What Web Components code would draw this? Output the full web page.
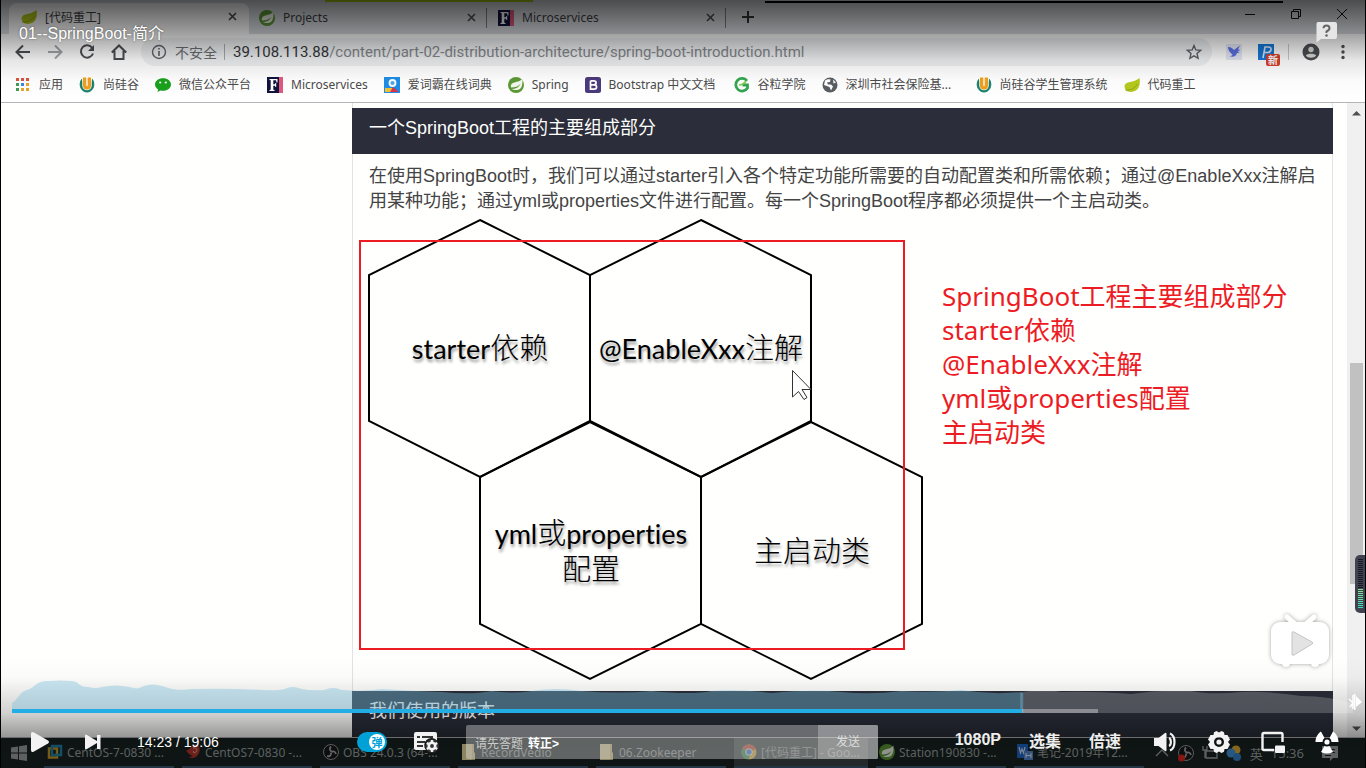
<!DOCTYPE html>
<html lang="zh-CN">
<head>
<meta charset="utf-8">
<title>01--SpringBoot-简介</title>
<style>
html,body{margin:0;height:100%;background:#000;overflow:hidden}
</style>
</head>
<body>
<video-player></video-player>

<template id="t-icon"><style>:host{display:block;flex:none;width:16px;height:16px}svg{display:block;width:100%;height:100%;overflow:visible}</style></template>

<template id="t-tab">
<style>
:host{display:flex;box-sizing:border-box;width:239px;height:27px;align-items:center;gap:8px;padding:0 10px;color:#3c4043;font-size:12px;position:relative}
:host([active]){background:#fff;height:31px;padding:0 10px 4px 12px;border-radius:8px 8px 0 0}
:host([line])::after{content:"";position:absolute;right:1px;top:4px;height:20px;width:1px;background:#7c7e82}
span{flex:1;white-space:nowrap}
button{all:unset;width:14px;height:14px;display:grid;place-items:center}
button svg{width:9px;height:9px}
</style>
<slot name="icon"></slot><span><slot></slot></span>
<button aria-label="关闭标签"><svg viewBox="0 0 9 9"><path d="M1 1l7 7M8 1L1 8" stroke="#4a4c50" stroke-width="1.6"/></svg></button>
</template>

<template id="t-bookmark">
<style>
:host{display:block;flex:none}
a{display:flex;align-items:center;gap:8px;color:#4a4a4a;text-decoration:none;font-size:12px;line-height:18px;white-space:nowrap}
</style>
<a href="#"><slot name="icon"></slot><span><slot></slot></span></a>
</template>

<template id="t-task">
<style>
:host{display:flex;box-sizing:border-box;flex:none;width:130px;height:30px;align-items:center;gap:4px;padding:0 3px;border-bottom:2px solid #3c5873;color:#9da2a2;white-space:nowrap}
:host([active]){width:134px;padding-left:7px;background:#3c4644}
</style>
<slot name="icon"></slot><span><slot></slot></span>
</template>

<template id="t-browser">
<style>
:host{display:flex;flex-direction:column;height:100%;background:#fffffe;font-family:"Noto Sans","Noto Sans CJK SC",sans-serif}
.tabs{display:flex;align-items:flex-end;height:34px;background:#dcdee3;padding-left:9px;box-sizing:border-box;position:relative}
.tabs ui-tab{margin-bottom:3px}
.tabs ui-tab[active]{margin-bottom:0;width:240px}
.new{all:unset;width:42px;height:34px;display:grid;place-items:center}
.win{margin-left:auto;display:flex;align-self:flex-start;gap:30px;padding:6px 15px 0 0}
.win button{all:unset;width:16px;height:16px}
.edge{position:absolute;top:0;height:2px}
.bar{display:flex;align-items:center;height:36px;box-sizing:border-box;padding:0 14px 0 15px;background:#fff;flex:none}
.nav{display:flex;gap:16px;width:126px}
.nav button,.ext button{all:unset;width:16px;height:16px}
.omni{flex:1;display:flex;align-items:center;height:28px;border-radius:14px;background:#eff1f3;padding:0 10px;box-sizing:border-box;color:#6b6e72;white-space:nowrap}
.omni .s{font-size:14px;margin:0 7px 0 8px}
.omni .sep{width:1px;height:16px;background:#aaa;margin-right:8px}
.url{font-size:15px;flex:1;font-family:Roboto,"Noto Sans",sans-serif;color:#85888c}.url b{font-weight:400;color:#33363a}
.ext{display:flex;align-items:center;gap:16px;padding-left:14px}
.ext .sep{width:1px;height:16px;background:#ccc;margin:0 -2px}
.p{position:relative}.p i{position:absolute;left:8px;top:10px;width:14px;height:12px;border-radius:2px;background:#d9412f;color:#fff;font:bold 10px/12px "Noto Sans CJK SC",sans-serif;text-align:center}
.marks{display:flex;align-items:center;gap:16px;height:33px;box-sizing:border-box;border-bottom:1px solid #b5b5b5;padding:0 15px 3px;background:#fff;flex:none}
.view{flex:1;min-height:0;overflow:hidden;display:grid;grid-template-columns:minmax(0,352px) 1fr 14px 18px}
main{border:1px solid #e3e3e6;border-width:0 1px;padding-top:5px;min-width:0}
h2{margin:0 0 0 -1px;height:46px;box-sizing:border-box;padding:7px 17px;background:#2b2e3a;color:#fff;font:400 18px/26px "Liberation Sans","Noto Sans CJK SC",sans-serif;margin-right:-1px}
p{margin:0;padding:10px 16px 0;font:400 18px/25px "Liberation Sans","Noto Sans CJK SC",sans-serif;color:#444;white-space:nowrap}
.scroll{background:#f0f0f0;position:relative;display:flex;flex-direction:column;justify-content:space-between;align-items:center;padding:7px 2px 5px 3px}
.scroll svg{width:9px;height:6px}
.thumb{position:absolute;left:3px;right:2px;top:260px;height:221px;background:#c1c1c1}
</style>
<div class="tabs">
 <span class="edge" style="left:325px;width:208px;background:#a8cc13"></span>
 <span class="edge" style="left:765px;right:82px;top:1px;background:#000"></span>
 <ui-tab active><ui-icon slot="icon" name="leaf"></ui-icon>[代码重工]</ui-tab>
 <ui-tab line><ui-icon slot="icon" name="spring"></ui-icon>Projects</ui-tab>
 <ui-tab line><ui-icon slot="icon" name="f"></ui-icon>Microservices</ui-tab>
 <button class="new" aria-label="新标签"><svg width="12" height="12"><path d="M6 0v12M0 6h12" stroke="#333" stroke-width="2"/></svg></button>
 <div class="win">
  <button aria-label="最小化"><ui-icon name="min"></ui-icon></button><button aria-label="还原"><ui-icon name="restore"></ui-icon></button><button aria-label="关闭"><ui-icon name="close"></ui-icon></button>
 </div>
</div>
<div class="bar">
 <div class="nav">
  <button aria-label="后退"><ui-icon name="back"></ui-icon></button><button aria-label="前进"><ui-icon name="fwd"></ui-icon></button><button aria-label="刷新"><ui-icon name="reload"></ui-icon></button><button aria-label="主页"><ui-icon name="home"></ui-icon></button>
 </div>
 <div class="omni"><ui-icon name="info"></ui-icon><span class="s">不安全</span><span class="sep"></span><span class="url"><b>39.108.113.88</b>/content/part-02-distribution-architecture/spring-boot-introduction.html</span><ui-icon name="star"></ui-icon></div>
 <div class="ext"><ui-icon name="bird"></ui-icon><span class="p"><ui-icon name="p"></ui-icon><i>新</i></span><span class="sep"></span><ui-icon name="user"></ui-icon><ui-icon name="dots"></ui-icon></div>
</div>
<nav class="marks">
 <book-mark><ui-icon slot="icon" name="apps"></ui-icon>应用</book-mark>
 <book-mark><ui-icon slot="icon" name="gu"></ui-icon>尚硅谷</book-mark>
 <book-mark><ui-icon slot="icon" name="wechat"></ui-icon>微信公众平台</book-mark>
 <book-mark><ui-icon slot="icon" name="f"></ui-icon>Microservices</book-mark>
 <book-mark><ui-icon slot="icon" name="ciba"></ui-icon>爱词霸在线词典</book-mark>
 <book-mark><ui-icon slot="icon" name="spring"></ui-icon>Spring</book-mark>
 <book-mark style="width:133px"><ui-icon slot="icon" name="b"></ui-icon>Bootstrap 中文文档</book-mark>
 <book-mark><ui-icon slot="icon" name="g"></ui-icon>谷粒学院</book-mark>
 <book-mark style="width:138px"><ui-icon slot="icon" name="globe"></ui-icon>深圳市社会保险基...</book-mark>
 <book-mark><ui-icon slot="icon" name="gu"></ui-icon>尚硅谷学生管理系统</book-mark>
 <book-mark><ui-icon slot="icon" name="leaf"></ui-icon>代码重工</book-mark>
</nav>
<div class="view">
 <span></span>
 <main>
  <h2>一个SpringBoot工程的主要组成部分</h2>
  <p>在使用SpringBoot时，我们可以通过starter引入各个特定功能所需要的自动配置类和所需依赖；通过@EnableXxx注解启<br>用某种功能；通过yml或properties文件进行配置。每一个SpringBoot程序都必须提供一个主启动类。</p>
  <hex-diagram></hex-diagram>
  <h2>我们使用的版本</h2>
 </main>
 <span></span>
 <div class="scroll"><svg viewBox="0 0 9 6"><path d="M0 5.500L4.500 1 9 5.500z" fill="#505050"/></svg><span class="thumb"></span><svg viewBox="0 0 9 6"><path d="M0 .5h9L4.500 5z" fill="#505050"/></svg></div>
</div>
</template>

<template id="t-hex">
<style>
:host{display:block;position:relative;height:477px}
svg.c{position:absolute;left:0;top:0;width:980px;height:477px;overflow:visible}
.l{position:absolute;width:222px;text-align:center;font:300 29px/34px "Noto Sans CJK SC",sans-serif;color:#000;text-shadow:1px 3px 3px rgba(0,0,0,.4);white-space:nowrap}
.l b{font:400 27px/32px Lato,sans-serif;font-variant-ligatures:none}
.note{position:absolute;left:589px;top:65px;font:26px/34px "Noto Sans","Noto Sans CJK SC",sans-serif;color:#ed1c24;white-space:nowrap}
</style>
<svg class="c" viewBox="353 214 980 477" fill="none" stroke="#000" stroke-width="2">
<path d="M480 220L590 275V421L480 477 369 421V275zM701 220L811 275V421L701 477 590 421V275z"/>
<path d="M590 422L701 477V624L590 679 480 624V477zM811 422L922 477V624L811 679 701 624V477z"/>
</svg>
<div class="l" style="left:16px;top:115px"><b>starter</b>依赖</div>
<div class="l" style="left:237px;top:115px"><b>@EnableXxx</b>注解</div>
<div class="l" style="left:127px;top:300px"><b>yml</b>或<b>properties</b><br>配置</div>
<div class="l" style="left:348px;top:318px">主启动类</div>
<svg class="c" viewBox="353 214 980 477"><rect x="360" y="241" width="544" height="408" fill="none" stroke="#ed1c24" stroke-width="2"/>
<path d="M792.500 370.500V397l6-5.500 5.500 8 3-2-5-8h9z" fill="#fff" stroke="#333" stroke-width="1"/></svg>
<div class="note">SpringBoot工程主要组成部分<br>starter依赖<br>@EnableXxx注解<br>yml或properties配置<br>主启动类</div>
</template>

<template id="t-taskbar">
<style>
:host{display:flex;align-items:center;height:30px;background:#172321;padding-left:11px;gap:8px;border-top:1px solid #b8b8b8;font-family:"Noto Sans","Noto Sans CJK SC",sans-serif;color:#9da2a2;font-size:12px;white-space:nowrap}
.start{margin-right:9px}
.tray{margin-left:auto;display:flex;align-items:center;gap:8px;padding-right:27px;font-size:13px}
</style>
<ui-icon class="start" name="windows"></ui-icon>
<task-item><ui-icon slot="icon" name="vm"></ui-icon>CentOS-7-0830 ...</task-item>
<task-item><ui-icon slot="icon" name="shell"></ui-icon>CentOS7-0830 -...</task-item>
<task-item><ui-icon slot="icon" name="obs"></ui-icon>OBS 24.0.3 (64-...</task-item>
<task-item><ui-icon slot="icon" name="folder"></ui-icon>RecordVedio</task-item>
<task-item><ui-icon slot="icon" name="folder"></ui-icon>06.Zookeeper</task-item>
<task-item active><ui-icon slot="icon" name="chrome"></ui-icon>[代码重工] - Goo...</task-item>
<task-item><ui-icon slot="icon" name="spring"></ui-icon>Station190830 -...</task-item>
<task-item><ui-icon slot="icon" name="note"></ui-icon>笔记-2019年12...</task-item>
<div class="tray"><ui-icon name="chev"></ui-icon><ui-icon name="obsr"></ui-icon><ui-icon name="power"></ui-icon><ui-icon name="cloud"></ui-icon><span>英</span><time>15:36</time><ui-icon name="notif" style="margin-left:10px"></ui-icon></div>
</template>

<template id="t-controls">
<style>
:host{display:block;color:#fff;font-family:"Liberation Sans","Noto Sans CJK SC",sans-serif}
.prog{position:relative;margin:0 12px;height:34px}
.prog svg{position:absolute;inset:0;width:100%;height:100%}
.track{position:absolute;left:0;right:0;bottom:0;height:4px}
.buf{position:absolute;left:0;width:81%;height:4px;background:rgba(255,255,255,.35)}
.done{position:absolute;left:0;width:75.35%;height:4px;background:#23ade5}
.row{display:grid;grid-template-columns:326px 521px 1fr;align-items:center;height:34px;padding:12px 26px 9px 31px}
button{all:unset;display:block;flex:none;white-space:nowrap}
.left{display:flex;align-items:center}
.time{font-size:14px;margin-left:36px}
.mid{display:flex;align-items:center;height:34px}
.switch{appearance:none;margin:0;width:30px;height:20px;border-radius:10px;background:#00a1d6}
.tw{position:relative;height:20px}
.tw span{position:absolute;right:2px;top:2px;width:16px;height:16px;border-radius:8px;background:#fff;color:#00a1d6;font:bold 11px/16px "Noto Sans CJK SC",sans-serif;text-align:center}
.box{flex:1;height:34px;margin-left:28px;display:flex;align-items:center;background:rgba(255,255,255,.34);border-radius:2px;font-size:12px;color:#ccc}
.box label{padding-left:9px;white-space:nowrap}.box a{color:#fff;text-decoration:none;margin-left:5px;white-space:nowrap;font-weight:bold}
.box input{all:unset;flex:1;min-width:0}
.send{width:60px;height:34px;text-align:center;background:rgba(255,255,255,.25);color:#ddd;line-height:34px}
.right{display:flex;justify-content:flex-end;align-items:center;font-size:16px;font-weight:bold;height:34px}
.txt{display:flex;gap:28px;margin-right:32px;color:#eee;padding-bottom:4px}
.ic{display:flex;gap:30px}.ic ui-icon{width:24px;height:24px}
</style>
<div class="prog">
<svg viewBox="0 0 1342 34" preserveAspectRatio="none">
<path fill="rgba(118,190,220,.4)" d="M0 34V24C6 21 8 12 15 11 25 8 22 2 38 2Q48 1 60 2C68 3 66 8 76 8Q84 10 90 8 105 5 117 8C125 10 126 10 132 7Q140 4 150 7C160 10 165 12 180 10Q220 9 250 11 265 12 273 10 280 6 290 10 300 12 312 11 322 7 330 11Q350 13 370 10 400 12 430 13 460 16 480 12 500 15 520 12 545 8 570 12 610 15 640 12 680 16 700 12 730 10 760 14 800 10 830 13 860 16 890 12 920 14 950 11 980 16 1011 13V34z"/>
<path fill="rgba(255,255,255,.2)" d="M1011 34V13Q1035 9 1050 13 1080 12 1120 15 1150 10 1180 12 1200 16 1230 13 1260 12 1290 17 1320 17 1342 25V34z"/>
<path fill="rgba(118,190,220,.4)" d="M1009 14h3v20h-3z"/></svg>
<div class="track"><span class="buf"></span><span class="done"></span></div>
</div>
<div class="row">
 <div class="left"><button aria-label="播放"><ui-icon name="play" style="width:18px;height:22px"></ui-icon></button><button aria-label="下一个" style="margin-left:36px"><ui-icon name="next"></ui-icon></button><span class="time">14:23 / 19:06</span></div>
 <div class="mid"><label class="tw"><input class="switch" type="checkbox" checked aria-label="弹幕"><span>弹</span></label><button aria-label="弹幕设置" style="margin-left:27px"><ui-icon name="dmset" style="width:24px;height:20px"></ui-icon></button>
 <div class="box"><label for="dm">请先答题</label><a href="#">转正&gt;</a><input id="dm" type="text"><button class="send">发送</button></div></div>
 <div class="right"><div class="txt"><button>1080P</button><button>选集</button><button>倍速</button></div>
 <div class="ic"><button aria-label="音量"><ui-icon name="vol"></ui-icon></button><button aria-label="设置"><ui-icon name="gear"></ui-icon></button><button aria-label="画中画"><ui-icon name="pip"></ui-icon></button><button aria-label="全屏"><ui-icon name="rad"></ui-icon></button></div></div>
</div>
</template>

<template id="t-player">
<style>
:host{display:flex;flex-direction:column;height:100vh;box-sizing:border-box;border:solid #000;border-width:0 1px 0 0;position:relative;overflow:hidden;background:#000}
:host::before{content:"";position:absolute;left:0;top:0;bottom:0;width:1px;background:#000;z-index:5}
.screen{flex:1;min-height:0}
.shade{position:absolute;left:0;right:0;top:0;height:100px;background:linear-gradient(rgba(0,0,0,.66),rgba(0,0,0,.37) 34px,rgba(0,0,0,.1) 60px,rgba(0,0,0,.02) 80px,transparent)}
.low{position:absolute;left:0;right:0;bottom:0;height:110px;background:linear-gradient(transparent,rgba(0,0,0,.02) 20px,rgba(0,0,0,.18) 55px,rgba(0,0,0,.42) 80px,rgba(0,0,0,.4))}
h1{position:absolute;left:19px;top:24px;margin:0;font:400 16px/20px "Liberation Sans","Noto Sans CJK SC",sans-serif;color:#fff;text-shadow:0 0 2px rgba(0,0,0,.5)}
.help{position:absolute;right:28px;top:22px;width:21px;height:21px}
.tv{position:absolute;right:34px;bottom:100px;width:62px;height:54px}
.pin{position:absolute;right:3px;bottom:56px;width:14px;height:20px}
.rec{position:absolute;right:-1px;top:555px;width:11px;height:58px;border-radius:5px 0 0 5px;background:#41424f;z-index:6;display:grid;place-items:center}
.rec i{width:5px;height:50px;background:repeating-linear-gradient(transparent 0 1px,#41424f 1px 2px),linear-gradient(#161a26 0 29px,#8fe08a 30px,#34e0c0)}
player-controls{position:absolute;left:0;right:0;bottom:0}
</style>
<browser-window class="screen"></browser-window>
<desktop-taskbar></desktop-taskbar>
<div class="shade"></div><div class="low"></div>
<h1>01--SpringBoot-简介</h1>
<ui-icon class="help" name="help"></ui-icon>
<ui-icon class="tv" name="tv"></ui-icon>
<ui-icon class="pin" name="pin"></ui-icon>
<span class="rec"><i></i></span>
<player-controls></player-controls>
</template>

<script>
const ring='<circle cx="8" cy="8" r="7.500" fill="#15181a" stroke="#9a9a9a"/><path d="M8 2.500c-2 2-1 4 .5 5M13 10c-1-3-3-3-4.500-2M4 12c3 1 4.500-1 4-3.500" fill="none" stroke="#aaa" stroke-width="1.800"/>';
const ICONS={
leaf:['0 0 16 16','<path d="M15.500 1C17 9 14 14.500 7 15 2.500 15 .5 12 .5 9 1 4 10 6 15.500 1z" fill="#b5c91c"/><path d="M1.500 13C6 13.500 11 11.500 13.500 7" stroke="#93a512" stroke-width="1" fill="none"/>'],
spring:['0 0 16 16','<circle cx="8" cy="8" r="8" fill="#5c9a35"/><path d="M14.300 1.500C15 7 14 13.500 8 13c-2 0-3.500-.5-4.500-1C8 12 11 10 12.500 7 10 9.500 7 10.500 3 10.500 1.500 5 9 5 11 4.200 13 3.500 13.500 2.500 14.300 1.500z" fill="#f4f8ee"/>'],
f:['0 0 16 16','<path fill="#10123f" d="M0 0h12v16H0z"/><path fill="#e2587f" d="M12 0h4v16h-4z"/><path fill="#fff" d="M2.500 2h8v3.500H9.500L9 3.300H6.300v4H8l.4-1.300h.8v4h-.8L8 8.700H6.300v4l1.200.4v.9h-5v-.9l1.200-.4V3.300l-1.200-.4z"/>'],
min:['0 0 16 16','<path d="M3 8.500h10" stroke="#111"/>'],
restore:['0 0 16 16','<path d="M3.500 5.500h7v7h-7zM5.500 5V3.500h7v7H11" fill="none" stroke="#111"/>'],
close:['0 0 16 16','<path d="M3 3l10 10M13 3L3 13" stroke="#111"/>'],
back:['0 0 16 16','<path d="M15 8H2M8 1.500L1.500 8 8 14.500" fill="none" stroke="#4b4e52" stroke-width="2"/>'],
fwd:['0 0 16 16','<path d="M1 8h13M8 1.500L14.500 8 8 14.500" fill="none" stroke="#a4a6a8" stroke-width="2"/>'],
reload:['0 0 16 16','<path d="M13.300 4A6.200 6.200 0 1 0 14 9.500" fill="none" stroke="#4b4e52" stroke-width="2"/><path d="M15 1v6H9z" fill="#4b4e52"/>'],
home:['0 0 16 16','<path d="M.8 8.500L8 1.500l7.200 7M3.500 7v8h9V7" fill="none" stroke="#4b4e52" stroke-width="2"/>'],
info:['0 0 16 16','<circle cx="8" cy="8" r="6.500" fill="none" stroke="#5f6368" stroke-width="1.400"/><path d="M8 4v1.600M8 7v5" stroke="#5f6368" stroke-width="1.600"/>'],
star:['0 0 16 16','<path d="M8 1.500l1.800 4.400 4.900.4-3.700 3.200 1.100 4.800L8 11.800l-4.100 2.500L5 9.500 1.300 6.300l4.900-.4z" fill="none" stroke="#5f6368" stroke-width="1.400"/>'],
bird:['0 0 16 16','<path fill="#e6e8f5" d="M0 0h16v16H0z"/><path d="M2 3C5 3 7 4.500 8 6l6-4.500L12 5.500l2.500.5-3 1.500 2.500 1-3 .5c-1 4-5 4.500-7.500 3 1.500 0 2.500-.5 3-1.500C4 9 2 6 2 3z" fill="#5c72e6"/>'],
p:['0 0 16 16','<path fill="#1779d8" d="M0 0h16v16H0z"/><path d="M5 14L7 3h3.500c4 0 3 5.500-1 5.500H6.500" fill="none" stroke="#d7ebff" stroke-width="1.600"/>'],
user:['0 0 16 16','<circle cx="8" cy="8" r="8.500" fill="#4b4e52"/><circle cx="8" cy="5.500" r="2.700" fill="#ddd"/><path d="M2.800 11.500C4 9 12 9 13.200 11.500 11 14.500 5 14.500 2.800 11.500z" fill="#ddd"/>'],
dots:['0 0 16 16','<g fill="#4b4e52"><circle cx="8" cy="2.500" r="1.700"/><circle cx="8" cy="8" r="1.700"/><circle cx="8" cy="13.500" r="1.700"/></g>'],
apps:['0 0 16 16','<g><path fill="#d9533f" d="M1 1h3v3H1zM6 1h3v3H6zM11 1h3v3h-3z"/><path fill="#3f9b55" d="M1 6h3v3H1z"/><path fill="#4285e8" d="M6 6h3v3H6z"/><path fill="#e6a52a" d="M11 6h3v3h-3zM6 11h3v3H6zM11 11h3v3h-3z"/><path fill="#3f9b55" d="M1 11h3v3H1z"/></g>'],
gu:['0 0 16 16','<path d="M2.500 2.500C-1 9 3 15 8 15s9-6 5.500-12.500L11.500 9h-7z" fill="#14806c" stroke="#14806c"/><path d="M3.200 1v7.500a4.800 4.800 0 0 0 9.600 0V1z" fill="#fbf3e0"/><path d="M4 .5h3.200V8q0 1.200.8 1.200T8.800 8V.5H12v8a4 4 0 0 1-8 0z" fill="#f0a020"/>'],
wechat:['0 0 16 16','<path d="M8 1.200c4.500 0 8 2.600 8 6.200s-3.500 6.300-8 6.300c-1 0-1.800 0-2.600-.3L2.500 15l.6-2.700C1.200 11.200 0 9.500 0 7.400 0 3.800 3.500 1.200 8 1.200z" fill="#1aa11c"/><circle cx="5.200" cy="5.500" r="1.100" fill="#fff"/><circle cx="10.800" cy="5.500" r="1.100" fill="#fff"/>'],
ciba:['0 0 16 16','<path fill="#1d8ee8" d="M0 0h16v16H0z"/><path fill="#f2c230" d="M1 11h8v4H1z"/><path fill="#d9324f" d="M9 10l6 5H6z"/><circle cx="8.500" cy="6" r="3" fill="#4aa9ef" stroke="#fff" stroke-width="1.800"/>'],
b:['0 0 16 16','<rect width="16" height="16" rx="2.500" fill="#4b3a7c"/><path d="M5.500 3.800h3.200c3.200 0 3.200 4 0 4H5.500m0 0h3.600c3.300 0 3.300 4.400 0 4.400H5.500zV3.800" fill="none" stroke="#fff" stroke-width="1.700"/>'],
g:['0 0 16 16','<path d="M13 3.800A6.300 6.300 0 1 0 13.500 11V8H8.500" fill="none" stroke="#35a553" stroke-width="2.800"/><path d="M5 8c3 0 5-1 7-4" stroke="#7ac943" stroke-width="1.500" fill="none"/>'],
globe:['0 0 16 16','<circle cx="8" cy="8" r="7.500" fill="#5a5d61"/><path d="M3 3.500c2-1.500 4-1.500 5.500-1L8 5l-3 .5 1 2H9l2 2-2 4-1.500-3.500L2 8zM11 2.500l3 3-2.500 1z" fill="#fff"/>'],
windows:['0 0 16 16','<path fill="#a0a4a4" d="M0 2.500l7-1v6H0zM8 1.300L16 0v7.500H8zM0 8.500h7v6l-7-1zM8 8.500h8V16l-8-1.300z"/>'],
vm:['0 0 16 16','<path d="M2 4.500h8v9H2z" fill="none" stroke="#c99a25" stroke-width="2.500"/><path d="M5 2h9v9H5z" fill="none" stroke="#1d86ad" stroke-width="2.500"/>'],
shell:['0 0 16 16','<path d="M1 6c3 1 4-3 8-5 5-1 7 4 5 8-2 5-7 6-10 4l4-1C5 11 2 9 1 6z" fill="#b8342c"/><path d="M8 4c3-1 5 2 3 4s-4 0-2-1" fill="none" stroke="#e8b0a0"/>'],
obs:['0 0 16 16',ring],
obsr:['0 0 16 16',ring+'<circle cx="3.500" cy="13" r="3.500" fill="#e3241c"/>'],
folder:['0 0 16 16','<path fill="#d8c383" d="M1 0h12v8l1 1v7H1z"/><path fill="#efdfa6" d="M1 0h10v16H1z"/>'],
chrome:['0 0 16 16','<circle cx="8" cy="8" r="7.500" fill="#e9b93a"/><path d="M8 8L1.500 4.200A7.500 7.500 0 0 1 14.800 5z" fill="#dc5143"/><path d="M8 8L1.500 4.200A7.500 7.500 0 0 0 7.500 15.500L10 9z" fill="#3b9a54"/><circle cx="8" cy="8" r="3.600" fill="#fff"/><circle cx="8" cy="8" r="2.700" fill="#4582e0"/>'],
note:['0 0 16 16','<path fill="#1f67c9" d="M0 0h11v14H0z"/><path d="M2 3l1.500 6L5 5l1.500 4L8 3" fill="none" stroke="#d0e2ff" stroke-width="1.200"/><path fill="#5487cf" d="M7 7h9v9H7z"/><path d="M9 9v5M14 9v5M9 11.500h5" stroke="#e0ecff" fill="none"/>'],
chev:['0 0 16 16','<path d="M2 11l6-6 6 6" fill="none" stroke="#a0a4a4" stroke-width="1.400"/>'],
power:['0 0 16 16','<path d="M4 6h11v7H4zM1 1v4h4V1M3 5v8" fill="none" stroke="#a0a4a4" stroke-width="1.300"/>'],
cloud:['0 0 16 16','<circle cx="10" cy="5" r="4.500" fill="#e4ae32"/><circle cx="5" cy="8" r="4.500" fill="#4295dc"/><circle cx="11" cy="12" r="4" fill="#3482ca"/>'],
notif:['0 0 16 16','<path fill="#a0a4a4" d="M0 1h16v12h-5l-3 3v-3H0z"/><path d="M3 4.500h10M3 7.500h10M3 10.500h6" stroke="#223"/>'],
play:['0 0 18 22','<path d="M0 3Q0 0 3 1.500L17 9.500Q19 11 17 12.500L3 20.500Q0 22 0 19z" fill="#f2f2f2"/>'],
next:['0 0 16 16','<path d="M0 1.500Q0 0 2 1l10 6V1h3.500v14H12V9L2 15Q0 16 0 14.500z" fill="#f2f2f2"/>'],
dmset:['0 0 24 20','<path d="M2 0h19q2 0 2 2v6.500A6.500 6.500 0 0 0 12 18H2q-2 0-2-2V2Q0 0 2 0z" fill="#f2f2f2"/><path d="M3 5h3M8 5h11M3 10h8M3 14h6" stroke="#333" stroke-width="1.800"/><circle cx="18" cy="14" r="6.800" fill="#333"/><circle cx="18" cy="14" r="3.200" fill="none" stroke="#f2f2f2" stroke-width="2.600"/><path d="M18 8v2.500M18 17.500V20M12.800 11l2.200 1.300M21 15.700l2.200 1.300M12.800 17l2.200-1.300M21 12.300l2.200-1.300" stroke="#f2f2f2" stroke-width="2.400"/>'],
vol:['0 0 24 24','<path d="M1 8h4.500L12 3q1.500-1 1.500 1v16q0 2-1.500 1l-6.500-5H1z" fill="#f2f2f2"/><path d="M16 8c2.500 1 2.500 7 0 8M17 3.500c6 2.500 6 14.500 0 17" fill="none" stroke="#f2f2f2" stroke-width="2.200"/>'],
gear:['0 0 24 24','<path fill-rule="evenodd" d="M9.500 1L7 2.200 6.500 5 3.500 5 1 9.500 3 12 1 14.500 3.500 19 6.500 19 7 21.800 9.500 23 12 21.500 14.500 23 17 21.800 17.500 19 20.500 19 23 14.500 21 12 23 9.500 20.500 5 17.500 5 17 2.200 14.500 1 12 2.500zM12 7a5 5 0 1 0 0 10 5 5 0 0 0 0-10z" fill="#f2f2f2"/><circle cx="12" cy="12" r="2.600" fill="#f2f2f2"/>'],
pip:['0 0 24 24','<path d="M13 20H3q-1.500 0-1.500-1.500v-14Q1.500 3 3 3h17q1.500 0 1.500 1.500V12" fill="none" stroke="#f2f2f2" stroke-width="2.400"/><rect x="14" y="15.500" width="10" height="7.500" rx="1" fill="#f2f2f2"/>'],
rad:['0 0 24 24','<circle cx="12" cy="12" r="2.600" fill="#fff"/><path d="M7.500 12H.5C.5 7 3 3.500 6 1.500L9.500 8Q7.500 9.500 7.500 12zM16.500 12h7C23.500 7 21 3.500 18 1.500L14.500 8Q16.500 9.500 16.500 12zM9.500 16q2.500 1.500 5 0l3.500 6q-6 3-12 0z" fill="#fff"/>'],
help:['0 0 21 21','<path d="M2 0h17q2 0 2 2v13q0 2-2 2H5l-4.500 3.500V2Q.5 0 2 0z" fill="#e6e6e6"/><path d="M7.500 6.300Q7.500 3.500 10.500 3.500t3 2.800Q13.500 8 10.500 9.500V11" fill="none" stroke="#666" stroke-width="2"/><circle cx="10.500" cy="13.500" r="1.300" fill="#666"/>'],
tv:['0 0 62 54','<g style="filter:drop-shadow(0 0 2px rgba(0,0,0,.35))"><path d="M18 3l8 7M45 3l-8 7" stroke="#fff" stroke-width="5" stroke-linecap="round"/><rect x="2" y="8" width="58" height="42" rx="9" fill="#fff"/><circle cx="17" cy="49" r="4" fill="#fff"/><circle cx="46" cy="49" r="4" fill="#fff"/></g><path d="M23 19Q23 17 25 18L43 28Q45 29 43 30L25 41Q23 42 23 40z" fill="#e3e3e3" stroke="#c4c4c4"/>'],
pin:['0 0 14 20','<path d="M1 7l4 4-3 4M5 3v14" fill="none" stroke="#fff" stroke-width="1.500"/><path d="M6 2h1.500v16H6zM8 4l6 6-6 5z" fill="#fff"/>']
};
const shadow=(el,id)=>{const r=el.attachShadow({mode:'open'});r.append(document.getElementById(id).content.cloneNode(true));return r};
customElements.define('ui-icon',class extends HTMLElement{
  connectedCallback(){
    if(this.shadowRoot)return;
    const r=shadow(this,'t-icon'),[box,body]=ICONS[this.getAttribute('name')];
    const w=document.createElement('template');
    w.innerHTML=`<svg viewBox="${box}" aria-hidden="true">${body}</svg>`;
    r.append(w.content);
  }
});
for(const [tag,id] of [['ui-tab','t-tab'],['book-mark','t-bookmark'],['task-item','t-task'],['hex-diagram','t-hex'],['browser-window','t-browser'],['desktop-taskbar','t-taskbar'],['player-controls','t-controls'],['video-player','t-player']])
  customElements.define(tag,class extends HTMLElement{constructor(){super();shadow(this,id)}});
</script>
</body>
</html>
